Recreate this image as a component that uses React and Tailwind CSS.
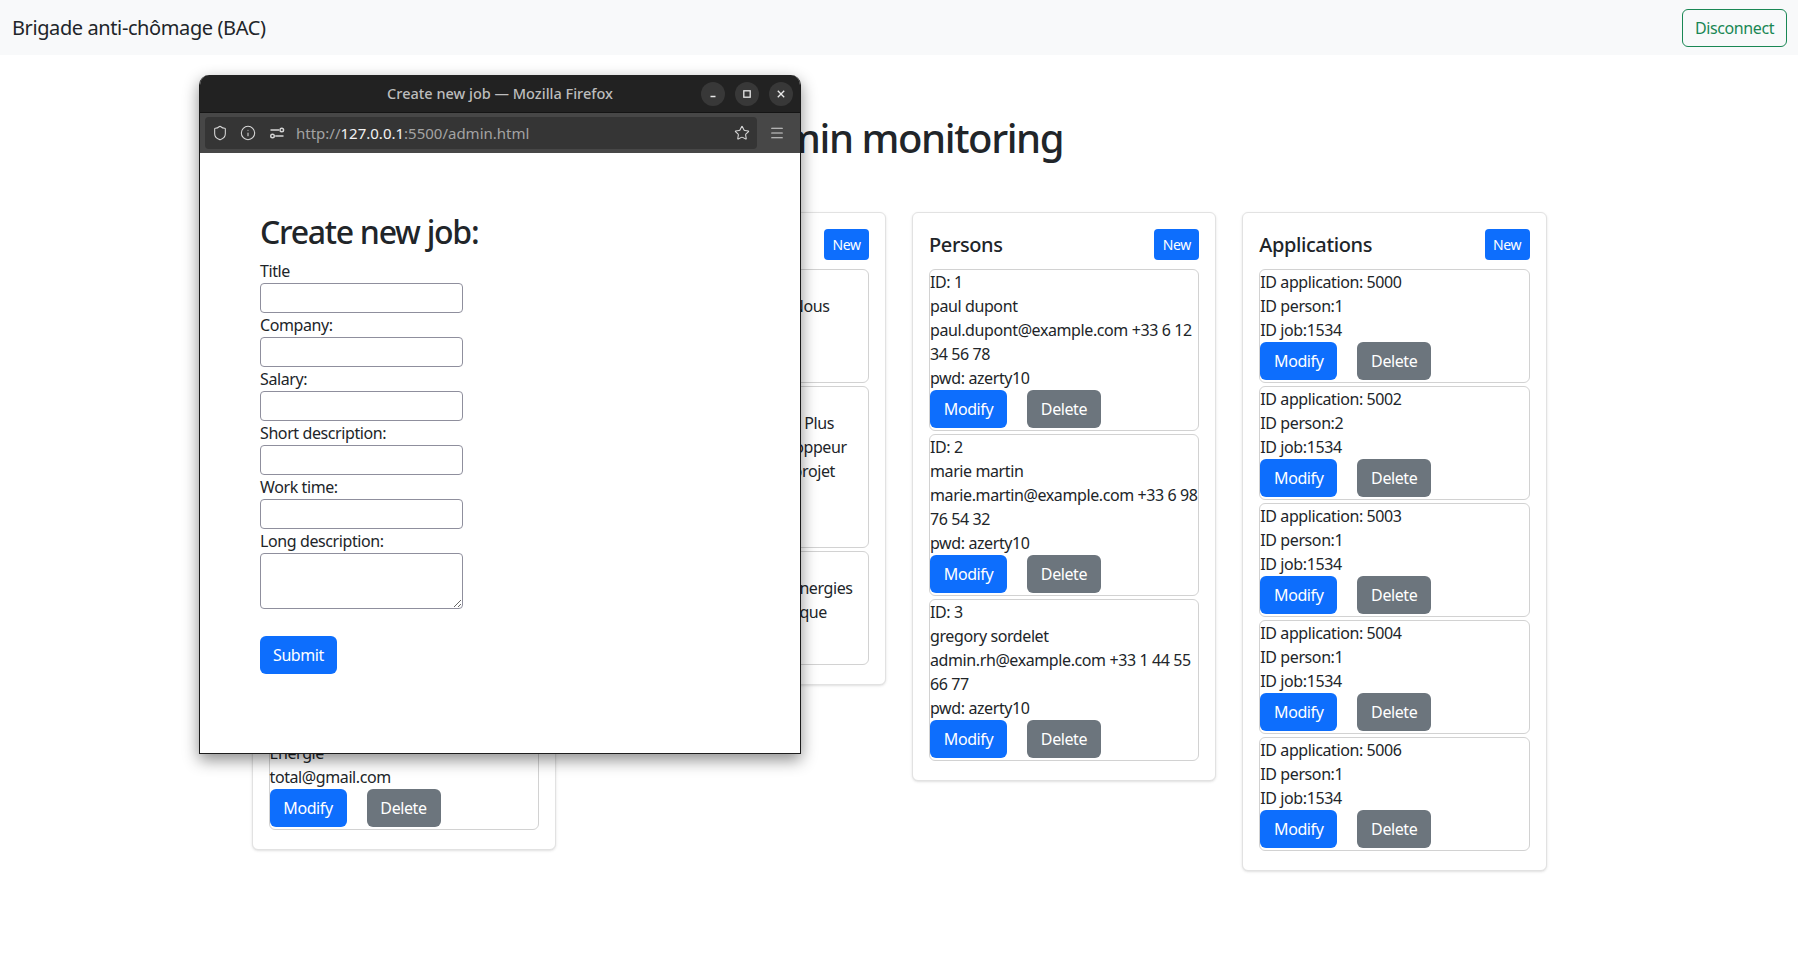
import React from 'react';
import { Shield, Info, Star, Menu } from 'lucide-react';

const companies = [
  ['ID: 1', 'Capgemini', 'Informatique', 'contact@capgemini.com'],
  ['ID: 2', 'Airbus', 'Aéronautique', 'rh@airbus.com'],
  ['ID: 3', 'Orange', 'Télécommunications', 'jobs@orange.com'],
  ['ID: 4', 'Total', 'Energie', 'total@gmail.com'],
];

const jobs = [
  ['ID: 1534', 'Développeur Web qualifié. Nous', 'recrutons en CDI'],
  [
    'ID: 1535',
    'Cheffe de projet IT chez Info Plus',
    'Nous recherchons un développeur',
    'expérimenté(e) pour notre projet',
    'Salaire: 42000 €',
  ],
  ['ID: 1536', 'Un ingénieur spécialisé en énergies', 'renouvelable et profil technique'],
];

const persons = [
  ['ID: 1', 'paul dupont', 'paul.dupont@example.com +33 6 12', '34 56 78', 'pwd: azerty10'],
  ['ID: 2', 'marie martin', 'marie.martin@example.com +33 6 98', '76 54 32', 'pwd: azerty10'],
  ['ID: 3', 'gregory sordelet', 'admin.rh@example.com +33 1 44 55', '66 77', 'pwd: azerty10'],
];

const applications = [
  ['ID application: 5000', 'ID person:1', 'ID job:1534'],
  ['ID application: 5002', 'ID person:2', 'ID job:1534'],
  ['ID application: 5003', 'ID person:1', 'ID job:1534'],
  ['ID application: 5004', 'ID person:1', 'ID job:1534'],
  ['ID application: 5006', 'ID person:1', 'ID job:1534'],
];

const Item = ({ lines }) => (
  <div className="mb-[3px] border border-[#d2d2d2] rounded-[6px] pb-[2px] whitespace-nowrap">
    {lines.map((line, i) => (
      <div key={i} className="leading-6">{line}</div>
    ))}
    <div className="flex gap-5">
      <button className="h-[38px] w-[77px] rounded-[6px] bg-[#0d6efd] text-white">Modify</button>
      <button className="h-[38px] w-[74px] rounded-[6px] bg-[#6c757d] text-white">Delete</button>
    </div>
  </div>
);

const Panel = ({ title, items }) => (
  <section className="bg-white border border-[#e2e2e2] rounded-[6px] shadow-sm p-4">
    <div className="flex items-center justify-between mb-[9px]">
      <h5 className="text-[20px] leading-6 font-medium">{title}</h5>
      <button className="h-[31px] w-[45px] text-[14px] rounded-[4px] bg-[#0d6efd] text-white">New</button>
    </div>
    {items.map((lines, i) => (
      <Item key={i} lines={lines} />
    ))}
  </section>
);

// small "permissions" glyph of the url bar
const PermIcon = () => (
  <svg width="16" height="16" viewBox="0 0 16 16" fill="none" stroke="#d6d6d6" strokeWidth="1.4">
    <line x1="1.5" y1="5" x2="10" y2="5" />
    <circle cx="12.8" cy="5" r="1.8" />
    <circle cx="3.5" cy="11" r="1.8" />
    <line x1="6.2" y1="11" x2="14.5" y2="11" />
  </svg>
);

const WinButton = ({ children }) => (
  <div className="w-6 h-6 rounded-full bg-[#383838] flex items-center justify-center">
    <svg width="10" height="10" viewBox="0 0 10 10" fill="none" stroke="#e8e8e8" strokeWidth="1.3">
      {children}
    </svg>
  </div>
);

const FirefoxWindow = () => (
  <div className="absolute left-[199px] top-[75px] w-[602px] h-[679px] flex flex-col rounded-t-[10px] overflow-hidden border-x border-b border-[#1c1c1c] shadow-[0_6px_16px_rgba(0,0,0,0.45)]">
    <div className="h-[37px] shrink-0 bg-[#222222] grid grid-cols-[1fr_auto_1fr] items-center">
      <div />
      <span className="text-[14.5px] tracking-normal font-medium text-[#bdbdbd]">Create new job — Mozilla Firefox</span>
      <div className="flex justify-end gap-[10px] pr-[7px]">
        <WinButton>
          <line x1="2.5" y1="7.5" x2="7.5" y2="7.5" />
        </WinButton>
        <WinButton>
          <rect x="1.8" y="1.8" width="6.4" height="6.4" />
        </WinButton>
        <WinButton>
          <line x1="1.8" y1="1.8" x2="8.2" y2="8.2" />
          <line x1="8.2" y1="1.8" x2="1.8" y2="8.2" />
        </WinButton>
      </div>
    </div>
    <div className="h-[41px] shrink-0 bg-[#474747] border-t border-[#151515] flex items-center pl-[5px] pr-[15px] gap-3">
      <div className="w-[552px] h-[32px] bg-[#353535] rounded-[4px] flex items-center pl-[7px] pr-[7px]">
        <Shield size={16} strokeWidth={1.6} color="#d6d6d6" />
        <Info size={16} strokeWidth={1.6} color="#d6d6d6" className="ml-3" />
        <span className="ml-[13px]"><PermIcon /></span>
        <span className="ml-[11px] text-[15px] tracking-normal text-[#a3a3a3]">
          http://<span className="text-[#f2f2f2]">127.0.0.1</span>:5500/admin.html
        </span>
        <Star size={16} strokeWidth={1.6} color="#d6d6d6" className="ml-auto" />
      </div>
      <Menu size={16} strokeWidth={1.6} color="#d6d6d6" />
    </div>
    <div className="flex-1 bg-white pl-[60px] pt-[60px] text-[#212529]">
      <h2 className="text-[32px] leading-[38px] font-medium tracking-[-0.04em] mb-2">Create new job:</h2>
      <form>
        {['Title', 'Company:', 'Salary:', 'Short description:', 'Work time:'].map((label) => (
          <div key={label}>
            <label className="block leading-6">{label}</label>
            <input className="block w-[203px] h-[30px] border border-[#8f8f9d] rounded-[4px] bg-white" />
          </div>
        ))}
        <label className="block leading-6">Long description:</label>
        <textarea className="block w-[203px] h-[56px] border border-[#8f8f9d] rounded-[4px] bg-white" />
        <button type="button" className="mt-[27px] h-[38px] w-[77px] rounded-[6px] bg-[#0d6efd] text-white">
          Submit
        </button>
      </form>
    </div>
  </div>
);

export default function App() {
  return (
    <div className="relative min-h-[961px] bg-white text-[#212529] text-base tracking-[-0.025em] font-['Noto_Sans',sans-serif]">
      <nav className="h-[55px] bg-[#f8f9fa] flex items-center justify-between pl-3 pr-[11px]">
        <span className="text-[20px]">Brigade anti-chômage (BAC)</span>
        <button className="h-[38px] w-[105px] border border-[#198754] text-[#198754] rounded-[6px]">Disconnect</button>
      </nav>
      <main>
        <h1 className="text-center text-[40px] leading-[48px] font-medium tracking-[-0.035em] mt-[59px] mb-[50px]">
          Admin monitoring
        </h1>
        <div className="w-[1295px] mx-auto grid grid-cols-4 gap-[26px] items-start">
          <Panel title="Companies" items={companies} />
          <Panel title="Jobs" items={jobs} />
          <Panel title="Persons" items={persons} />
          <Panel title="Applications" items={applications} />
        </div>
      </main>
      <FirefoxWindow />
    </div>
  );
}
